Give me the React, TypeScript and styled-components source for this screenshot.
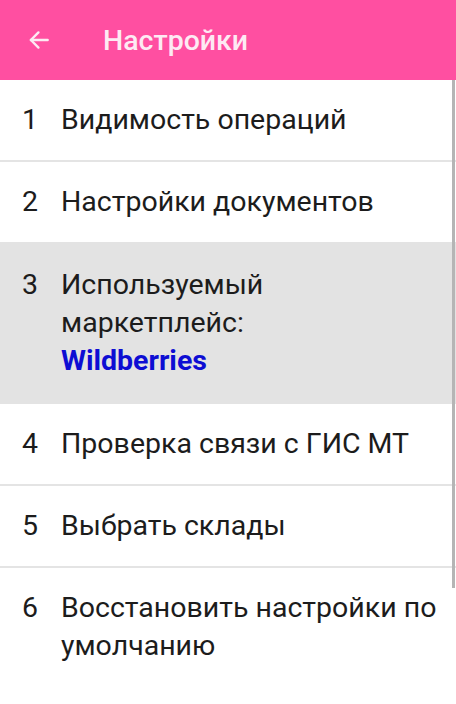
import React from "react";
import styled, { createGlobalStyle } from "styled-components";

const GlobalStyle = createGlobalStyle`
  html, body {
    margin: 0;
    padding: 0;
    background: #ffffff;
    font-family: Roboto, "Noto Sans", "Liberation Sans", sans-serif;
  }
`;

const Screen = styled.div`
  width: 456px;
  height: 704px;
  overflow: hidden;
  display: flex;
  flex-direction: column;
  background: #ffffff;
`;

const Toolbar = styled.header`
  height: 80px;
  flex-shrink: 0;
  display: flex;
  align-items: center;
  background: #ff4fa1;
  padding-left: 26px;
`;

const BackButton = styled.button`
  width: 26px;
  height: 26px;
  padding: 0;
  border: none;
  background: transparent;
  display: flex;
  align-items: center;
  justify-content: center;
  margin-right: 51px;
`;

const Title = styled.h1`
  margin: 0;
  font-size: 28.5px;
  font-weight: 500;
  color: #fdeaf3;
`;

const List = styled.div`
  position: relative;
  flex: 1;
  display: flex;
  flex-direction: column;
`;

const Row = styled.div<{ selected?: boolean; pad: number }>`
  display: flex;
  align-items: flex-start;
  padding: ${({ pad }) => pad}px 0 ${({ pad }) => pad}px 22px;
  background: ${({ selected }) => (selected ? "#e3e3e3" : "#ffffff")};
  font-size: 28.5px;
  line-height: 38px;
  color: #1c1c1c;
`;

const Divider = styled.div`
  height: 2px;
  background: #e4e4e4;
`;

const Num = styled.span`
  width: 39px;
  flex-shrink: 0;
`;

const Label = styled.span`
  flex: 1;
  padding-right: 12px;
`;

const Highlight = styled.span`
  display: block;
  color: #0d0dd3;
  font-weight: 700;
`;

const ScrollThumb = styled.div`
  position: absolute;
  top: 0;
  right: 1px;
  width: 3px;
  height: 508px;
  background: #b5b5b5;
`;

type Item = { label: string; value?: string; selected?: boolean; pad?: number };

const items: Item[] = [
  { label: "Видимость операций" },
  { label: "Настройки документов" },
  { label: "Используемый маркетплейс:", value: "Wildberries", selected: true, pad: 24 },
  { label: "Проверка связи с ГИС МТ" },
  { label: "Выбрать склады" },
  { label: "Восстановить настройки по умолчанию" },
];

function ArrowBack() {
  return (
    <svg width="26" height="26" viewBox="0 0 24 24" fill="none" stroke="#fdeaf3" strokeWidth="2.2" strokeLinecap="round" strokeLinejoin="round">
      <path d="M20 12H4.5" />
      <path d="M11.5 5 4.5 12l7 7" />
    </svg>
  );
}

export default function App() {
  return (
    <Screen>
      <GlobalStyle />
      <Toolbar>
        <BackButton aria-label="Назад">
          <ArrowBack />
        </BackButton>
        <Title>Настройки</Title>
      </Toolbar>
      <List>
        {items.map((item, i) => (
          <React.Fragment key={i}>
            {i > 0 && !item.selected && !items[i - 1].selected && <Divider />}
            <Row selected={item.selected} pad={item.pad ?? 21}>
              <Num>{i + 1}</Num>
              <Label>
                {item.label}
                {item.value && <Highlight>{item.value}</Highlight>}
              </Label>
            </Row>
          </React.Fragment>
        ))}
        <ScrollThumb />
      </List>
    </Screen>
  );
}
